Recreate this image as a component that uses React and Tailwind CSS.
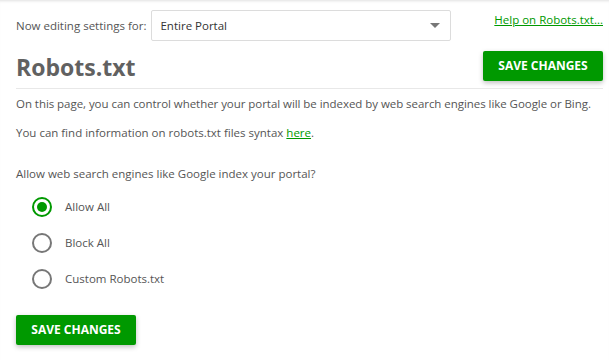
export default function App() {
  const options = ['Allow All', 'Block All', 'Custom Robots.txt'];
  const selected = 'Allow All';

  return (
    <div
      className="min-h-[360px] w-[609px] bg-white text-[11.5px] text-[#555] shadow-[inset_0_3px_3px_-2px_rgba(0,0,0,0.12)]"
      style={{ fontFamily: '"Open Sans", "Noto Sans", sans-serif' }}
    >
      <div className="pl-4 pr-[6px] pt-[10px]">
        {/* top row */}
        <div className="flex items-start justify-between">
          <div className="flex items-center">
            <span className="mr-[5px]">Now editing settings for:</span>
            <div className="flex h-[31px] w-[300px] items-center justify-between rounded-[2px] border border-[#dcdcdc] pl-[8px] pr-[10px] text-[#333]">
              <span>Entire Portal</span>
              <span className="h-0 w-0 border-x-[5px] border-t-[5px] border-x-transparent border-t-[#777]"></span>
            </div>
          </div>
          <a href="#" className="mt-[1px] text-[#009900] underline">
            Help on Robots.txt...
          </a>
        </div>

        {/* title row */}
        <div className="mt-[10px] flex items-end justify-between border-b border-[#e8e8e8] pb-[7px]">
          <h1 className="text-[23px] font-bold leading-[28px] text-[#616161]">Robots.txt</h1>
          <button className="h-[30px] w-[120px] rounded-[2px] bg-[#009900] text-[12px] font-bold text-white shadow-[0_2px_5px_rgba(0,0,0,0.25)]">
            SAVE CHANGES
          </button>
        </div>
      </div>

      <div className="pl-4 pr-[2px]">
        <p className="mt-[5px] whitespace-nowrap leading-[20px] tracking-[-0.05px]">
          On this page, you can control whether your portal will be indexed by web search engines like Google or Bing.
        </p>
        <p className="mt-[9px] leading-[20px]">
          You can find information on robots.txt files syntax{' '}
          <a href="#" className="text-[#009900] underline">here</a>.
        </p>

        <p className="mt-[21px] leading-[20px]">Allow web search engines like Google index your portal?</p>

        <div className="mt-[5px] pl-[16px]">
          {options.map((opt) => (
            <label key={opt} className="flex h-[36px] items-center gap-[13px]">
              <span
                className={
                  opt === selected
                    ? 'flex h-[20px] w-[20px] items-center justify-center rounded-full border-2 border-[#009900]'
                    : 'flex h-[20px] w-[20px] items-center justify-center rounded-full border-2 border-[#777]'
                }
              >
                {opt === selected && <span className="h-[10px] w-[10px] rounded-full bg-[#009900]"></span>}
              </span>
              <span>{opt}</span>
            </label>
          ))}
        </div>

        <button className="mt-[18px] h-[30px] w-[120px] rounded-[2px] bg-[#009900] text-[12px] font-bold text-white shadow-[0_2px_5px_rgba(0,0,0,0.25)]">
          SAVE CHANGES
        </button>
      </div>
    </div>
  );
}
